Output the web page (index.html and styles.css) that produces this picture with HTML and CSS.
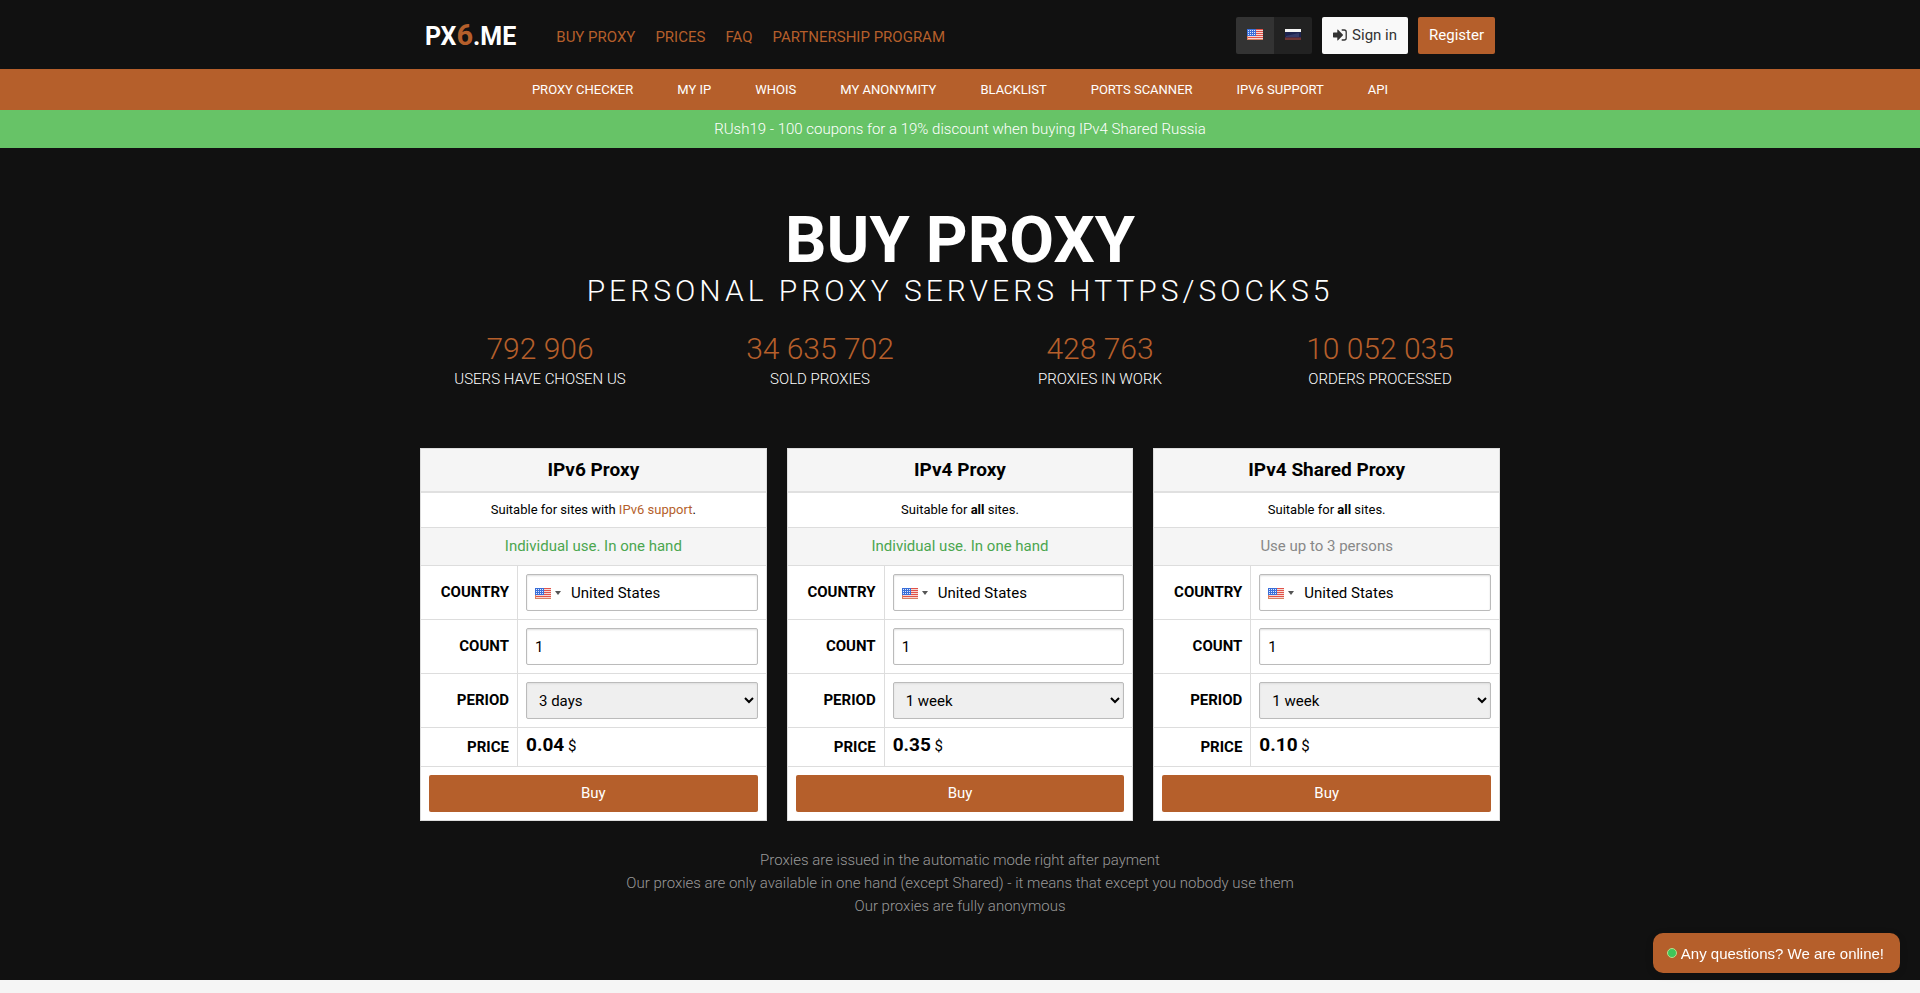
FILE: index.html
```html
<!DOCTYPE html>
<html lang="en">
<head>
<meta charset="utf-8">
<title>PX6.ME - Buy proxy</title>
<link rel="stylesheet" href="styles.css">
</head>
<body>
<svg class="sprite" aria-hidden="true">
  <symbol id="flag-us" viewBox="0 0 16 11">
    <rect width="16" height="11" fill="#f7d9d2"/>
    <path d="M0 .5h16M0 2.5h16M0 4.5h16M0 6.5h16M0 8.5h16M0 10.5h16" stroke="#e0524a"/>
    <rect width="9" height="7" fill="#3b6fd8"/>
    <path d="M1 1.5h8M1 3.5h8M1 5.5h8" stroke="#dfe9ff" stroke-dasharray="1 1"/>
    <path d="M0 10.5h16M.5 7v4" stroke="#d9805f"/>
  </symbol>
  <symbol id="flag-ru" viewBox="0 0 16 11">
    <rect width="16" height="4" fill="#f4f4f4"/>
    <rect y="3" width="16" height="5" fill="#1d2450"/>
    <path d="M1 7 14 4v4H1z" fill="#343a68"/>
    <rect y="8" width="16" height="3" fill="#6d3434"/>
    <path d="M0 8.5h16" stroke="#4a2a42"/>
  </symbol>
</svg>

<header class="topbar">
  <div class="container topbar-inner">
    <a class="brand" href="#">PX<span class="brand-six">6</span>.ME</a>
    <nav class="main-nav">
      <a href="#">BUY PROXY</a>
      <a href="#">PRICES</a>
      <a href="#">FAQ</a>
      <a href="#">PARTNERSHIP PROGRAM</a>
    </nav>
    <div class="actions">
      <div class="langs">
        <button class="lang lang-active" type="button" aria-label="English"><svg class="flag"><use href="#flag-us"/></svg></button>
        <button class="lang" type="button" aria-label="Russian"><svg class="flag"><use href="#flag-ru"/></svg></button>
      </div>
      <button class="btn btn-light" type="button">
        <svg class="login" viewBox="0 0 14 12"><path fill="currentColor" d="M0 4.200q0-.6.600-.6h3.700V1q0-.9.800-.3l4.700 4.800q.4.500 0 1L5.100 11.300q-.8.600-.8-.3V8.400H.6q-.6 0-.6-.6z"/><path d="M8.700 1h2.500q2 0 2 2v6q0 2-2 2H8.700" fill="none" stroke="currentColor" stroke-width="1.300"/></svg>
        Sign in</button>
      <button class="btn" type="button">Register</button>
    </div>
  </div>
</header>

<nav class="tools">
  <a href="#">PROXY CHECKER</a>
  <a href="#">MY IP</a>
  <a href="#">WHOIS</a>
  <a href="#">MY ANONYMITY</a>
  <a href="#">BLACKLIST</a>
  <a href="#">PORTS SCANNER</a>
  <a href="#">IPV6 SUPPORT</a>
  <a href="#">API</a>
</nav>
<div class="promo">RUsh19 - 100 coupons for a 19% discount when buying IPv4 Shared Russia</div>

<main class="hero">
  <div class="container">
    <h1 class="title">BUY PROXY</h1>
    <p class="subtitle">PERSONAL PROXY SERVERS HTTPS/SOCKS5</p>
    <div class="stats">
      <div><div class="stat-value">792 906</div><div>USERS HAVE CHOSEN US</div></div>
      <div><div class="stat-value">34 635 702</div><div>SOLD PROXIES</div></div>
      <div><div class="stat-value">428 763</div><div>PROXIES IN WORK</div></div>
      <div><div class="stat-value">10 052 035</div><div>ORDERS PROCESSED</div></div>
    </div>

    <div class="cards">
      <form class="card">
        <h2 class="card-title">IPv6 Proxy</h2>
        <p class="card-note">Suitable for sites with <a href="#">IPv6 support</a>.</p>
        <p class="card-use use-single">Individual use. In one hand</p>
        <div class="row"><label class="label" for="country1">COUNTRY</label><div class="cell"><input class="field country" id="country1" value="United States"><svg class="flag country-flag"><use href="#flag-us"/></svg><span class="caret"></span></div></div>
        <div class="row"><label class="label" for="count1">COUNT</label><div class="cell"><input class="field" id="count1" value="1"></div></div>
        <div class="row"><label class="label" for="period1">PERIOD</label><div class="cell"><select class="field select" id="period1"><option>3 days</option></select></div></div>
        <div class="row"><div class="label">PRICE</div><div class="cell price"><b class="amount">0.04</b> $</div></div>
        <div class="buy"><button class="btn btn-buy" type="button">Buy</button></div>
      </form>
      <form class="card">
        <h2 class="card-title">IPv4 Proxy</h2>
        <p class="card-note">Suitable for <b>all</b> sites.</p>
        <p class="card-use use-single">Individual use. In one hand</p>
        <div class="row"><label class="label" for="country2">COUNTRY</label><div class="cell"><input class="field country" id="country2" value="United States"><svg class="flag country-flag"><use href="#flag-us"/></svg><span class="caret"></span></div></div>
        <div class="row"><label class="label" for="count2">COUNT</label><div class="cell"><input class="field" id="count2" value="1"></div></div>
        <div class="row"><label class="label" for="period2">PERIOD</label><div class="cell"><select class="field select" id="period2"><option>1 week</option></select></div></div>
        <div class="row"><div class="label">PRICE</div><div class="cell price"><b class="amount">0.35</b> $</div></div>
        <div class="buy"><button class="btn btn-buy" type="button">Buy</button></div>
      </form>
      <form class="card">
        <h2 class="card-title">IPv4 Shared Proxy</h2>
        <p class="card-note">Suitable for <b>all</b> sites.</p>
        <p class="card-use">Use up to 3 persons</p>
        <div class="row"><label class="label" for="country3">COUNTRY</label><div class="cell"><input class="field country" id="country3" value="United States"><svg class="flag country-flag"><use href="#flag-us"/></svg><span class="caret"></span></div></div>
        <div class="row"><label class="label" for="count3">COUNT</label><div class="cell"><input class="field" id="count3" value="1"></div></div>
        <div class="row"><label class="label" for="period3">PERIOD</label><div class="cell"><select class="field select" id="period3"><option>1 week</option></select></div></div>
        <div class="row"><div class="label">PRICE</div><div class="cell price"><b class="amount">0.10</b> $</div></div>
        <div class="buy"><button class="btn btn-buy" type="button">Buy</button></div>
      </form>
    </div>

    <p class="notes">Proxies are issued in the automatic mode right after payment<br>Our proxies are only available in one hand (except Shared) - it means that except you nobody use them<br>Our proxies are fully anonymous</p>
  </div>
</main>

<button class="chat" type="button"><span class="dot"></span>Any questions? We are online!</button>
</body>
</html>
```
FILE: styles.css
```css
* { box-sizing: border-box; }
html { overflow: hidden; }
body { margin: 0; background: #f5f5f5; color: #000; font: 15px/23px Roboto, "Liberation Sans", sans-serif; }
h1, h2, p { margin: 0; font-weight: inherit; }
a { color: #b55f2b; text-decoration: none; }
button, input, select { font: inherit; }
.sprite { position: absolute; width: 0; height: 0; }
.container { max-width: 1080px; margin: 0 auto; }

.topbar { background: #111; }
.topbar-inner { display: flex; align-items: center; height: 69px; padding: 0 5px; }
.brand { color: #fff; font-size: 25px; font-weight: 700; line-height: 32px; padding-top: 2px; }
.brand-six { color: #b55f2b; font-size: 29px; }
.main-nav { display: flex; gap: 20px; margin-left: 40px; padding-top: 6px; }
.actions { display: flex; gap: 10px; margin-left: auto; padding-top: 2px; }
.langs { display: flex; border-radius: 2px; overflow: hidden; }
.lang { display: flex; align-items: center; justify-content: center; width: 38px; border: 0; padding: 0 0 2px; background: #222; }
.lang-active { background: #333; }
.flag { display: block; width: 16px; height: 11px; }
.btn { height: 37px; border: 0; border-radius: 2px; padding: 0 11px; background: #b55f2b; color: #fff; }
.btn-light { background: #f9f9f9; color: #333; }
.login { width: 14px; height: 12px; margin-right: 1px; vertical-align: -1px; }

.tools { display: flex; justify-content: center; gap: 44px; background: #b55f2b; font-size: 13px; line-height: 41px; }
.tools a { color: #fff; }
.promo { background: #67c367; color: #fff; font-weight: 300; line-height: 38px; text-align: center; }

.hero { background: #111; color: #fff; padding: 60px 0 62px; text-align: center; }
.title { font-size: 65px; font-weight: 700; line-height: 64px; }
.subtitle { font-size: 30px; font-weight: 300; letter-spacing: 4px; line-height: 38px; }
.stats { display: grid; grid-template-columns: repeat(4, 1fr); gap: 40px; margin-top: 20px; font-weight: 300; }
.stat-value { color: #b55f2b; font-size: 30px; line-height: 38px; }

.cards { display: grid; grid-template-columns: repeat(3, 1fr); gap: 20px; margin-top: 57px; color: #000; }
.card { border: 1px solid #ddd; background: #fff; }
.card-title { border-bottom: 2px solid #e0e0e0; background: #f5f5f5; font-size: 19px; font-weight: 700; line-height: 42px; }
.card-note { border-bottom: 1px solid #ddd; font-size: 13px; line-height: 34px; }
.card-use { border-bottom: 1px solid #ddd; background: #f5f5f5; color: #888; line-height: 37px; }
.use-single { color: #4ba64f; }
.row { display: grid; grid-template-columns: 97px 1fr; border-bottom: 1px solid #ddd; }
.label { display: flex; align-items: center; justify-content: flex-end; border-right: 1px solid #ddd; padding-right: 8px; font-weight: 700; }
.cell { position: relative; padding: 8px; text-align: left; }
.field { display: block; width: 100%; height: 37px; border: 1px solid #bbb; border-radius: 2px; padding: 0 8px; background: #fff; color: #000; box-shadow: inset 0 1px 2px #ddd; }
.country { padding-left: 44px; }
.select { background: #efefef; }
.country-flag { position: absolute; top: 22px; left: 17px; }
.caret { position: absolute; top: 25px; left: 37px; border: 3px solid transparent; border-top: 4px solid #555; border-bottom: 0; }
.price { padding: 7px 8px 8px; }
.amount { font-size: 19px; line-height: 19px; }
.buy { padding: 8px; }
.btn-buy { display: block; width: 100%; }
.notes { margin-top: 28px; color: #999; font-weight: 300; }

.chat { position: fixed; right: 20px; bottom: 20px; display: flex; align-items: center; gap: 4px; height: 40px; border: 0; border-radius: 10px; padding: 0 16px 0 14px; background: #b55f2b; color: #fff; font-family: "Liberation Sans", Arial, sans-serif; box-shadow: 0 2px 8px rgba(0, 0, 0, .1); }
.dot { width: 10px; height: 10px; border: 1px solid #b9dd8b; border-radius: 50%; background: #3fc65a; }
```
